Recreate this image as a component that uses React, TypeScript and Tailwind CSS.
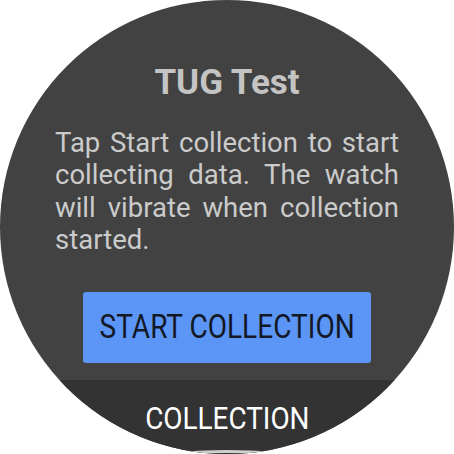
import React from 'react'

function App(): React.JSX.Element {
  return (
    <div className="w-[454px] h-[454px] bg-white" style={{ fontFamily: 'Roboto, "Noto Sans", sans-serif' }}>
      <div className="relative w-[454px] h-[454px] rounded-full bg-[#424242] overflow-hidden flex flex-col">
        <div className="flex flex-col items-center flex-1">
          <h1 className="mt-[61px] text-[35px] leading-[44px] font-bold text-[#c4c4c4]">TUG Test</h1>
          <p className="mt-[22px] w-[344px] text-[27.5px] leading-[32.4px] text-[#cbcbcb] text-justify">
            Tap Start collection to start collecting data. The watch will vibrate when collection started.
          </p>
          <button
            type="button"
            className="mt-[35px] w-[288px] h-[71px] rounded-[3px] bg-[#5b95f5] text-[#131826] flex items-center justify-center"
          >
            <span className="inline-block text-[33px] whitespace-nowrap scale-x-[0.85]">START COLLECTION</span>
          </button>
        </div>
        <div className="h-[74px] bg-[#333333] flex justify-center pt-[19px]">
          <span className="inline-block h-[40px] text-[31px] leading-[40px] text-white whitespace-nowrap scale-x-[0.9]">COLLECTION</span>
        </div>
        <div className="absolute left-[167px] bottom-[-6px] w-[120px] h-[10px] rounded-[50%] border-t-[3px] border-[#cfcfcf]" />
      </div>
    </div>
  )
}

export default App
